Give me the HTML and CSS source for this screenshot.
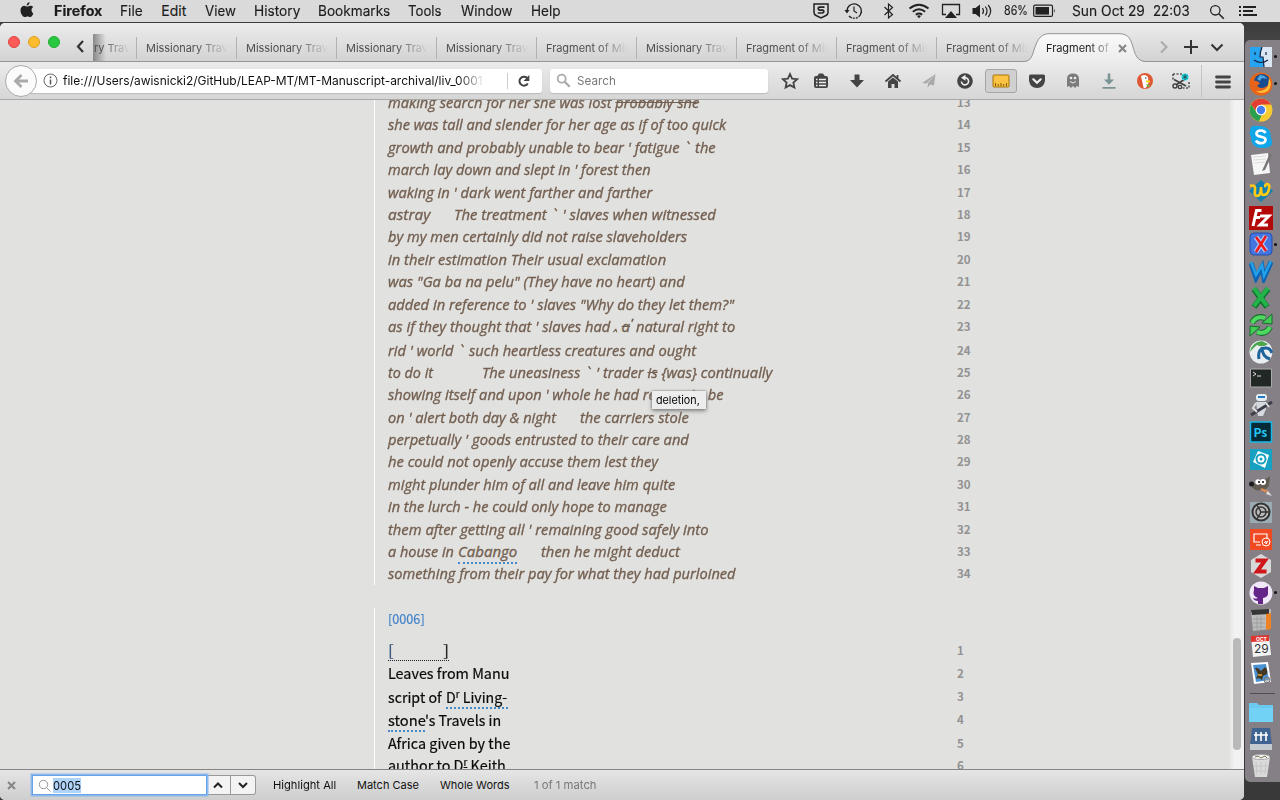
FILE: index.html
```html
<!DOCTYPE html>
<html lang="en">
<head>
<meta charset="utf-8">
<title>Fragment of Missionary Travels</title>
<link rel="stylesheet" href="styles.css">
</head>
<body>
<div class="screen">
<header class="menubar">
  <svg class="apple" width="16" height="18" viewBox="0 0 16 18"><path fill="#222" d="M10.6 1c.1 1.700-1.300 3.500-2.900 3.500C7.500 2.900 9 1.200 10.600 1zM14.300 12.400c-.8 2-2 3.700-3.200 3.700-1 0-1.400-.6-2.600-.6-1.200 0-1.600.6-2.600.6C4 16.100 1.500 12.700 1.500 9.400c0-3 1.900-4.600 3.800-4.600 1.200 0 2.200.8 2.900.8.7 0 1.900-.9 3.300-.9 1 0 2 .5 2.700 1.400-2.400 1.500-2 4.900.1 6.300z"/></svg>
  <nav class="menus"><b data-w="48">Firefox</b><span data-w="22.500">File</span><span data-w="25">Edit</span><span data-w="30.500">View</span><span data-w="46">History</span><span data-w="72">Bookmarks</span><span data-w="34">Tools</span><span data-w="52">Window</span><span data-w="30">Help</span></nav>
  <div class="status">
    <svg class="s-shield" width="18" height="18" viewBox="0 0 18 18"><path d="M2 2h14v8.500q0 2-2 3L9 16l-5-2.500q-2-1-2-3z" fill="none" stroke="#222" stroke-width="1.500"/><path d="M12.500 5.200H7.500Q6.200 5.200 6.200 6.500T7.500 8.200h3q1.300 0 1.300 1.300T10.500 11H5.800" fill="none" stroke="#222" stroke-width="1.700"/></svg>
    <svg class="s-clock" width="20" height="18" viewBox="0 0 20 18"><path d="M4 9a7.200 7.200 0 1 1 2 5" fill="none" stroke="#222" stroke-width="1.300" stroke-dasharray="29 1 2 1 2 1"/><path d="M1.500 8h5L4 11.500z" fill="#222"/><path d="M11 4.500V9l3 2" fill="none" stroke="#222" stroke-width="1.200"/></svg>
    <svg class="s-bt" width="12" height="18" viewBox="0 0 12 18"><path d="M1.500 5l8 7.500L5.500 16V2l4 3.500-8 7.500" fill="none" stroke="#222" stroke-width="1.200"/></svg>
    <svg class="s-wifi" width="22" height="18" viewBox="0 0 22 18"><g fill="none" stroke="#222" stroke-width="2"><path d="M1.500 6.500q9.500-7.500 19 0"/><path d="M4.800 9.700q6.200-4.800 12.400 0"/><path d="M7.800 12.700q3.200-2.400 6.400 0"/></g><path d="M9 14q2-1.500 4 0l-2 2.300z" fill="#222"/></svg>
    <svg class="s-air" width="20" height="18" viewBox="0 0 20 18"><path d="M5 12.500H1.500v-10h17v10H15" fill="none" stroke="#222" stroke-width="1.300"/><path d="M10 9l6 7H4z" fill="#222"/></svg>
    <svg class="s-vol" width="23" height="18" viewBox="0 0 23 18"><path d="M1.500 6h3L9 2.500v13L4.500 12h-3z" fill="#222"/><g fill="none" stroke="#222" stroke-width="1.200"><path d="M11.500 6q2 3 0 6"/><path d="M14.300 4.500q3.500 4.500 0 9"/><path d="M17.200 3q5 6 0 12"/></g></svg>
    <span class="pct" data-w="24">86%</span>
    <svg class="s-bat" width="23" height="14" viewBox="0 0 23 14"><rect x=".7" y="1.200" width="18.800" height="11.200" rx="1.500" fill="none" stroke="#222" stroke-width="1.200"/><path d="M2.500 3H16v7.600H2.500z" fill="#222"/><path d="M21 4.500q1.500 2.300 0 4.600z" fill="#222"/></svg>
    <span class="date" data-w="73">Sun Oct 29</span><span class="time" data-w="37">22:03</span>
    <svg class="s-mag" width="16" height="16" viewBox="0 0 16 16"><circle cx="6.300" cy="6.300" r="4.700" fill="none" stroke="#222" stroke-width="1.300"/><path d="M9.800 9.800l5 5" stroke="#222" stroke-width="1.600"/></svg>
    <svg class="s-list" width="18" height="12" viewBox="0 0 18 12"><path d="M0 2h2M0 6h2M0 10h2M4 2h13M4 6h10M4 10h14" stroke="#222" stroke-width="2"/></svg>
  </div>
</header>
<div class="desktop">
<main class="window">
  <div class="tabs">
    <div class="lights"><i class="red"></i><i class="amber"></i><i class="green"></i></div>
    <svg class="scroll-left" width="12" height="16" viewBox="0 0 12 16"><path d="M9 3L4 8.500 9 14" fill="none" stroke="#333" stroke-width="2.200"/></svg>
    <div class="tab first"><span>ry Trav</span></div>
    <div class="tab"><span>Missionary Trav</span></div><div class="tab"><span>Missionary Trav</span></div><div class="tab"><span>Missionary Trav</span></div><div class="tab"><span>Missionary Trav</span></div><div class="tab"><span>Fragment of Mis</span></div><div class="tab"><span>Missionary Trav</span></div><div class="tab"><span>Fragment of Mis</span></div><div class="tab"><span>Fragment of Mis</span></div><div class="tab"><span>Fragment of Mis</span></div>
    <div class="tab active">
      <svg class="tab-shape" width="124" height="30" viewBox="0 0 124 30"><defs><linearGradient id="tg" x2="0" y2="1"><stop stop-color="#fafafa"/><stop offset="1" stop-color="#ebebeb"/></linearGradient></defs><path d="M0 28.500C9 28.500 9 22 12 14S18 .7 26 .7H96C106 .7 108 7 110 14S114 28.500 123 28.500V30H0z" fill="url(#tg)"/><path d="M0 28.500C9 28.500 9 22 12 14S18 .7 26 .7H96C106 .7 108 7 110 14S114 28.500 123 28.500" fill="none" stroke="#939393"/></svg>
      <span>Fragment of</span>
      <svg class="tab-x" width="9" height="9" viewBox="0 0 9 9"><path d="M1 1l7 7M8 1L1 8" stroke="#888" stroke-width="2.200"/></svg>
    </div>
    <div class="tab-tools">
      <svg width="12" height="16" viewBox="0 0 12 16"><path d="M3 2.500L8.500 8 3 13.500" fill="none" stroke="#aaa" stroke-width="2"/></svg>
      <svg width="16" height="16" viewBox="0 0 16 16"><path d="M8 1v14M1 8h14" stroke="#333" stroke-width="2"/></svg>
      <svg width="14" height="16" viewBox="0 0 14 16"><path d="M1.500 5.500L7 11l5.500-5.500" fill="none" stroke="#333" stroke-width="2"/></svg>
    </div>
  </div>
  <div class="toolbar">
    <div class="back"><svg width="16" height="16" viewBox="0 0 16 16"><path d="M15 8H3M8.500 2L2.500 8l6 6" fill="none" stroke="#aaa" stroke-width="2.800"/></svg></div>
    <div class="url">
      <svg width="15" height="15" viewBox="0 0 15 15"><circle cx="7.500" cy="7.500" r="6.500" fill="none" stroke="#666"/><path d="M7.500 6.500v5M7.500 3.500v1.700" stroke="#555" stroke-width="1.500"/></svg>
      <div class="address"><span data-w="420">file:///Users/awisnicki2/GitHub/LEAP-MT/MT-Manuscript-archival/liv_0001</span></div>
      <div class="reload"><svg width="14" height="14" viewBox="0 0 14 14"><path d="M10.800 9.500A4.500 4.500 0 1 1 10 3.800" fill="none" stroke="#444" stroke-width="2"/><path d="M12.300 1v6H6.500z" fill="#444"/></svg></div>
    </div>
    <div class="search"><svg width="15" height="15" viewBox="0 0 15 15"><circle cx="5.700" cy="5.700" r="4" fill="none" stroke="#aaa" stroke-width="1.800"/><path d="M8.700 8.700l5 5" stroke="#aaa" stroke-width="2.300"/></svg><span data-w="39">Search</span></div>
    <svg class="star" width="18" height="18" viewBox="0 0 18 18"><path d="M9 2l2.100 4.600 5 .6-3.700 3.400 1 5L9 13.100l-4.400 2.500 1-5L1.900 7.200l5-.6z" fill="none" stroke="#444" stroke-width="1.800"/></svg>
    <div class="buttons">
      <i><svg width="18" height="18" viewBox="0 0 18 18"><rect x="2" y="4" width="14" height="12" rx="2" fill="#444"/><path d="M5 4.500L7 1.500h4l2 3z" fill="#444"/><path d="M4 7.500h1.500M4 10.500h1.500M4 13.500h1.500M7 7.500h7M7 10.500h7M7 13.500h7" stroke="#eee" stroke-width="1.300"/></svg></i>
      <i><svg width="18" height="18" viewBox="0 0 18 18"><path d="M6.500 2.500h5V8H16l-7 7.500L2 8h4.500z" fill="#444"/></svg></i>
      <i><svg width="18" height="18" viewBox="0 0 18 18"><path d="M1.500 9.500L9 3l7.500 6.500M13.500 3v4" fill="none" stroke="#444" stroke-width="1.800"/><path d="M4 9.500l5-4 5 4V16h-3.500v-4h-3v4H4z" fill="#444"/></svg></i>
      <i><svg width="18" height="18" viewBox="0 0 18 18"><path d="M15.500 2L2 11l4.500.5zM15.500 2L8 11l-.5 5 2.500-3.500 4 1z" fill="#aaa"/></svg></i>
      <i><svg width="18" height="18" viewBox="0 0 18 18"><circle cx="9" cy="9" r="7.800" fill="#444"/><path d="M7.500 6A3.600 3.600 0 1 1 5.400 9.500" fill="none" stroke="#eee" stroke-width="1.600"/><path d="M9.500 2.800v6L5 5.800z" fill="#eee"/></svg></i>
      <i class="pressed"><svg width="18" height="14" viewBox="0 0 18 14"><rect x="1" y="1" width="16" height="12" rx="1" fill="#fac344" stroke="#a77306"/><path d="M3.500 12V9M6.200 12v-2M9 12V9m2.700 3v-2m2.800 2V9" stroke="#805400"/></svg></i>
      <i><svg width="18" height="18" viewBox="0 0 18 18"><path d="M1 4q0-1.500 1.500-1.500h13Q17 2.500 17 4v4.500q-1 7.500-8 7.500T1 8.500z" fill="#444"/><path d="M5.300 7.300L9 10.800l3.700-3.500" fill="none" stroke="#eee" stroke-width="2.200" stroke-linecap="round"/></svg></i>
      <i><svg width="18" height="18" viewBox="0 0 18 18"><path d="M3 15V7q0-5.500 6-5.500T15 7v8l-2-1-2 2-2-2-2 2-2-2z" fill="#7c7c7c"/><circle cx="7" cy="6" r="1.300" fill="#eee"/><circle cx="11" cy="6" r="1.300" fill="#eee"/><path d="M6 9.500q3 3 6 0" fill="none" stroke="#eee"/></svg></i>
      <i><svg width="18" height="18" viewBox="0 0 18 18"><path d="M7.700 1.500h2.600v6h3.700L9 12.800 4 7.500h3.700zM2.500 15h13v1.700h-13z" fill="#7b9393"/></svg></i>
      <i><svg width="18" height="18" viewBox="0 0 18 18"><circle cx="9" cy="9" r="8" fill="#de5833"/><path d="M5 4q4-2.500 7 1l.5 6-3 5.500-2-1z" fill="#fff"/><path d="M10 8.500h4v1.700h-4z" fill="#fdd20a"/><path d="M10 12l4 1-2 2.500z" fill="#67bd47"/><circle cx="9.700" cy="6" r=".8" fill="#345"/></svg></i>
      <i><svg width="20" height="18" viewBox="0 0 20 18"><path d="M2 2h9M2 2v6M18 10v6h-8" fill="none" stroke="#555" stroke-dasharray="2 1.500" stroke-width="1.600"/><path d="M3 7.500l12 6.500M5 13l9-6" stroke="#444" stroke-width="1.800"/><circle cx="4" cy="14" r="2" fill="none" stroke="#444" stroke-width="1.500"/><circle cx="9" cy="15" r="1.700" fill="none" stroke="#444" stroke-width="1.300"/><circle cx="14" cy="5" r="3.500" fill="#19ddec"/><path d="M14 2v6M11.500 3.500l5 3M16.500 3.500l-5 3" stroke="#255"/></svg></i>
    </div>
    <div class="burger"><svg width="16" height="14" viewBox="0 0 16 14"><path d="M1.500 2h13M1.500 7h13M1.500 12h13" stroke="#444" stroke-width="2.800" stroke-linecap="round"/></svg></div>
  </div>
  <div class="content">
    <div class="pages">
      <section class="page deleted" id="page5"></section>
      <section class="page" id="page6"></section>
    </div>
    <div class="tooltip"><span data-w="44">deletion,</span></div>
    <div class="track"><div class="thumb"></div></div>
  </div>
  <div class="find">
    <svg width="9" height="9" viewBox="0 0 9 9"><path d="M1 1l7 7M8 1L1 8" stroke="#858585" stroke-width="2"/></svg>
    <div class="find-field"><svg width="13" height="13" viewBox="0 0 13 13"><circle cx="5.500" cy="5.500" r="4.200" fill="none" stroke="#999"/><path d="M8.500 8.500l4 4" stroke="#999"/></svg><mark data-w="28">0005</mark></div>
    <div class="arrows"><i><svg width="12" height="10" viewBox="0 0 12 10"><path d="M2 7.500l4-4 4 4" fill="none" stroke="#222" stroke-width="2"/></svg></i><i><svg width="12" height="10" viewBox="0 0 12 10"><path d="M2 3l4 4 4-4" fill="none" stroke="#222" stroke-width="2"/></svg></i></div>
    <span class="opt" data-w="63">Highlight All</span><span class="opt" data-w="62">Match Case</span><span class="opt" data-w="70">Whole Words</span><span class="count" data-w="62.500">1 of 1 match</span>
  </div>
</main>
<aside class="dock">
  <i class="run"><svg viewBox="0 0 24 24"><path d="M1 2h22v20H1z" fill="#dbe6f2"/><path d="M1 2h12q-2 5-2 10h3l1 10H1z" fill="#26a4f0"/><path d="M6 7v3m11-3v3M5 15q7 5 14 0M13 2q-2 5-2 10h3l1 10" fill="none" stroke="#124" stroke-width="1.200"/></svg></i>
  <i class="run"><svg viewBox="0 0 24 24"><circle cx="12" cy="12" r="11.500" fill="#e66515"/><circle cx="13" cy="10" r="8" fill="#174c91"/><path d="M11 3q5 0 7 4l-5-1-2 3-3-2z" fill="#4aa5db"/><path d="M2 5q1 4 6 4l3 2-3 3q4 4 10 0 3-3 3-8 4 9-1 14-8 6-15 0Q-1 14 2 5z" fill="#e8641a"/><path d="M20 6q4 7-1 13-7 4-12 0 9 1 12-5z" fill="#ffc038"/></svg></i>
  <i><svg viewBox="0 0 24 24"><circle cx="12" cy="12" r="11.500" fill="#f7ca31"/><path d="M2 6.500a11.500 11.500 0 0 1 20 0H12L8 14z" fill="#e23e31"/><path d="M2 6.500L8 15l5 1-3 7.300A11.500 11.500 0 0 1 2 6.500z" fill="#2c9f4f"/><circle cx="12" cy="12" r="5.300" fill="#fff"/><circle cx="12" cy="12" r="4.200" fill="#477ff0"/></svg></i>
  <i><svg viewBox="0 0 24 24"><path d="M1 6q0-6 7-5 14-1 14 12 4 9-6 10Q2 24 2 12 0 9 1 6z" fill="#10a6e9"/><path d="M16.500 8Q15 5.500 12 5.500c-3 0-4.500 1.300-4.500 3.200 0 4.300 9 1.800 9 6 0 2-1.800 3.500-4.500 3.500Q8.500 18.200 7 15.500" fill="none" stroke="#fff" stroke-width="2.700"/></svg></i>
  <i><svg viewBox="0 0 24 24"><path d="M2 3l17-2 2 20-16 2z" fill="#f6f6f6"/><path d="M4 5l13-1m-13 4l13-1m-12 4l13-1" stroke="#ddd"/><path d="M21 1l-8 18 3-1 7-15z" fill="#777"/></svg></i>
  <i><svg viewBox="0 0 24 24"><path d="M12 1l12 11-12 11L0 12z" fill="#1280af"/><path d="M1 7q6-2 5 4-1 6 2 6 4 0 4-9 0 8 2 8 5 0 6-6 1-5-2-5-3 1-1 3" fill="none" stroke="#ffc915" stroke-width="2.700"/></svg></i>
  <i><svg viewBox="0 0 24 24"><path d="M0 0h24v24H0z" fill="#b40909"/><path d="M12.500 4.500H7.500L4 20M5 11.500h6M11 10h9l-9 9h8" fill="none" stroke="#fff" stroke-width="3"/></svg></i>
  <i class="run"><svg viewBox="0 0 24 24"><rect x="1" y="1" width="22" height="22" rx="4" fill="#4275dd" stroke="#254db0"/><path d="M7 5l10 14M17 4L7 20" stroke="#b7c9f5" stroke-width="5"/><path d="M7 5l10 14M17 4L7 20" stroke="#ed1b1b" stroke-width="2.600"/></svg></i>
  <i><svg viewBox="0 0 24 24"><path d="M2 4l5 15 6-11 2 11 7-16" fill="none" stroke="#0d65b6" stroke-width="5"/><path d="M2 3l5 13 6-10 2 11 7-15" fill="none" stroke="#23a0e8" stroke-width="2.500"/></svg></i>
  <i><svg viewBox="0 0 24 24"><path d="M5 3l13 18M19 3L5 21" stroke="#0d762c" stroke-width="6"/><path d="M5 2l13 18M19 2L5 20" stroke="#23b34b" stroke-width="4"/></svg></i>
  <i><svg viewBox="0 0 24 24"><g fill="none" stroke="#176c2a" stroke-width="6"><path d="M3 10q4-8 13-5M21 14q-4 8-13 5"/></g><g fill="none" stroke="#4eda61" stroke-width="4"><path d="M3 10q4-8 13-5M21 14q-4 8-13 5"/></g><path d="M13 10l10 1V1zM11 14l-10-1v10z" fill="#43cb56" stroke="#176c2a"/></svg></i>
  <i><svg viewBox="0 0 24 24"><circle cx="12" cy="12" r="11.500" fill="#e8eef2"/><path d="M1 12Q3 2 13 1l6 3q-5 4-11 1-4 3-7 7z" fill="#4ca64b"/><path d="M10 19Q8 8 17 8q4 0 6 5M13 7q0 10 8 12" fill="none" stroke="#1e659b" stroke-width="3"/></svg></i>
  <i><svg viewBox="0 0 24 24"><path d="M1.500 3h21v18h-21z" fill="#222826" stroke="#aaa"/><path d="M4 6l3 2-3 2M8 10h4" fill="none" stroke="#ddd"/></svg></i>
  <i><svg viewBox="0 0 24 24"><rect x="7" y="1" width="11" height="7" rx="3" fill="#e5edf5"/><path d="M9 4h7" stroke="#267bc2" stroke-width="2"/><path d="M7 9h10v7l-3 7h-5z" fill="#d5dae1"/><path d="M2 22L23 9" stroke="#3d3d4a" stroke-width="3"/><path d="M7 10l-3 5 4 4M17 10l3 4" fill="none" stroke="#ddd" stroke-width="2"/></svg></i>
  <i><svg viewBox="0 0 24 24"><path d="M1.500 2h21v20h-21z" fill="#062a37" stroke="#17b9e9" stroke-width="1.500"/><text x="4.500" y="17" class="ps">Ps</text></svg></i>
  <i><svg viewBox="0 0 24 24"><path d="M1 2h22v21H1z" fill="#16a0c1"/><path d="M9 4l11 4-4 13-12-6z" fill="#fff"/><circle cx="12" cy="12" r="4.500" fill="none" stroke="#16a0c1" stroke-width="2"/><circle cx="12" cy="12" r="1.500" fill="#16a0c1"/></svg></i>
  <i><svg viewBox="0 0 24 24"><path d="M1 10q2-3 6 0l2-4 4 2 8-6-1 9q-2 6-9 5-6 2-10-6z" fill="#625b51"/><circle cx="9" cy="8" r="2.700" fill="#fff"/><circle cx="14" cy="8" r="3" fill="#fff"/><circle cx="10" cy="8" r="1"/><circle cx="14" cy="8" r="1"/><circle cx="2.500" cy="10" r="2.500" fill="#1d1d1d"/><path d="M12 15l7 3" stroke="#e28c50" stroke-width="2"/><path d="M19 17l4 5-6-2z" fill="#ddd"/></svg></i>
  <i><svg viewBox="0 0 24 24"><path d="M1 2h22v21H1z" fill="#9babb3"/><circle cx="12" cy="12" r="8.500" fill="#bbb" stroke="#333" stroke-width="2"/><circle cx="12" cy="12" r="5" fill="none" stroke="#333" stroke-width="1.500"/><path d="M12 12h8M12 12L8 5m4 7l-4 7" fill="none" stroke="#333" stroke-width="1.500"/></svg></i>
  <i><svg viewBox="0 0 24 24"><path d="M1 2h22v21H1z" fill="#f04a23"/><path d="M11 15H5V7h13v4M7 18h5" fill="none" stroke="#fff" stroke-width="1.200"/><circle cx="17" cy="15" r="4" fill="none" stroke="#fff"/><path d="M15 16l2-2v3l2-3" fill="none" stroke="#fff"/></svg></i>
  <i><svg viewBox="0 0 24 24"><path d="M12 0l10 6v12l-10 6-10-6V6z" fill="#d8d8d8"/><path d="M6.500 6.500H16L8 17.500h9.500" fill="none" stroke="#cf171b" stroke-width="4"/></svg></i>
  <i class="run"><svg viewBox="0 0 24 24"><circle cx="12" cy="12" r="11.500" fill="#f0e8f8"/><path d="M5 5l4 2h6l4-2v6q1 5-5 6v6H9v-3q-4 0-5-3 3 1 5 0-6-2-4-8z" fill="#642488"/></svg></i>
  <i><svg viewBox="0 0 24 24"><path d="M2 4l20-3v20L4 23z" fill="#bbb"/><path d="M2 2l18-1v5L3 7z" fill="#363636"/><path d="M17 6l5-1v16l-5 1z" fill="#ed8123"/><path d="M4 11h12M4 15h12M4 19h12M8 8v14m4-14v14" stroke="#999" stroke-width=".8"/></svg></i>
  <i><svg viewBox="0 0 24 24"><path d="M2 3l18-1 2 19-18 2z" fill="#f4f4f4"/><path d="M2 2l18-1v6L2 8z" fill="#e1342e"/><text x="7" y="7" class="oct">OCT</text><text x="5" y="19" class="day">29</text></svg></i>
  <i><svg viewBox="0 0 24 24"><path d="M2 2l17-1 3 20-17 2z" fill="#fff"/><path d="M4 4l13-1 3 16-13 2z" fill="#4a92d4"/><path d="M6 7q3-1 6 3l4-4q3 2 2 7l-4 2-1 4-3-2-3 1 2-5z" fill="#463820"/><path d="M9 14h4" stroke="#e0a830" stroke-width="1.500"/><circle cx="18" cy="19" r="3" fill="#9998" stroke="#777"/></svg></i>
  <hr>
  <i><svg viewBox="0 0 24 24"><path d="M0 3h8l2 2h14v17H0z" fill="#69c9ef"/><path d="M0 8h24v14H0z" fill="#72d2f5"/></svg></i>
  <i><svg viewBox="0 0 24 24"><path d="M3 1h18l2 18H1z" fill="#3f6491"/><path d="M1 17h22v6H1z" fill="#c3cbd0"/><path d="M7 5v9m5-9v9m5-9v9M5 8h14" stroke="#fff" stroke-width="1.600"/></svg></i>
  <i><svg viewBox="0 0 24 24"><path d="M3 3h18l-3 20H6z" fill="#d9dad9"/><ellipse cx="12" cy="3" rx="9" ry="2.500" fill="#f5f5f5" stroke="#aaa"/><path d="M6 3l3-1 3 2 4-2 2 2" stroke="#775" fill="none"/><path d="M7 8l1 12m4-12v12m5-12l-1 12M5 12h14M6 17h12" stroke="#c6c6c6" fill="none"/></svg></i>
</aside>
</div>
</div>
<script src="script.js"></script>
</body>
</html>
```
FILE: styles.css
```css
* { box-sizing: border-box; }
body { margin: 0; font-family: Inter, "Liberation Sans", sans-serif; }
i { font-style: normal; }
svg { display: block; flex: none; }
[data-w] { display: inline-block; white-space: pre; flex: none; }
.fit { display: inline-block; transform-origin: 0 50%; white-space: pre; }
.screen { width: 1280px; height: 800px; overflow: hidden; display: flex; flex-direction: column; }

.menubar { height: 22px; flex: none; display: flex; align-items: center; background: #dadada; color: #1d1d1d; font-size: 14px; line-height: 22px; -webkit-text-stroke: .15px #1d1d1d; }
.apple { margin: -2px 0 0 19px; }
.menus { display: flex; gap: 18.400px; margin-left: 19px; }
.status { display: flex; align-items: center; margin-left: 251px; }
.s-clock { margin-left: 13px; }
.s-bt { margin-left: 20px; }
.s-wifi { margin-left: 13px; }
.s-air { margin-left: 11px; }
.s-vol { margin-left: 10px; }
.pct { margin-left: 10px; font-size: 12.500px; }
.s-bat { margin-left: 5px; }
.date { margin-left: 16px; }
.time { margin-left: 8px; }
.s-mag { margin: 2px 0 0 19px; }
.s-list { margin-left: 14px; }

.desktop { flex: 1; min-height: 0; display: flex; background: linear-gradient(#3c3c3c, #444 20px, #393939); padding-top: 1px; }
.window { width: 1244px; display: flex; flex-direction: column; border-radius: 5px; overflow: hidden; background: #e1e1df; }
.tabs { height: 39px; flex: none; display: flex; align-items: flex-start; background: linear-gradient(#ececec, #d3d3d3); border-bottom: 1px solid #959595; }
.lights { display: flex; gap: 8px; padding: 13px 0 0 8px; }
.lights i { width: 12px; height: 12px; border-radius: 50%; }
.red { background: #fc5b57; border: 1px solid #df443f; }
.amber { background: #fdbc2e; border: 1px solid #dfa023; }
.green { background: #28c940; border: 1px solid #1dac2d; }
.scroll-left { margin: 15px 0 0 14px; }
.tab { width: 100px; height: 38px; flex: none; padding: 14px 8px 0 10px; color: #505050; font-size: 11px; line-height: 22px; background: linear-gradient(#b2b2b2, #b2b2b2) 0 14px / 1px 22px no-repeat; }
.tab > span { display: block; white-space: nowrap; width: 82px; letter-spacing: -.04px; -webkit-mask-image: linear-gradient(90deg, #000 50px, transparent 82px); mask-image: linear-gradient(90deg, #000 50px, transparent 82px); }
.tab.first { width: 43px; margin-left: 7px; padding-left: 1px; background: linear-gradient(90deg, #888, #d3d3d300 13px) 0 11px / 14px 28px no-repeat; }
.tab.first > span { width: 34px; -webkit-mask-image: linear-gradient(90deg, #000 8px, transparent 36px); mask-image: linear-gradient(90deg, #000 8px, transparent 36px); }
.tab.active { position: relative; background: none; color: #222; }
.tab.active > span { position: relative; width: 66px; -webkit-mask-image: linear-gradient(90deg, #000 44px, transparent 68px); mask-image: linear-gradient(90deg, #000 44px, transparent 68px); }
.tab-shape { position: absolute; left: -13px; top: 10px; }
.tab-x { position: absolute; left: 82px; top: 21px; }
.tab-tools { display: flex; align-items: center; padding: 16px 0 0 22px; gap: 13px; }
.tab-tools svg:last-child { margin-left: -2px; }

.toolbar { height: 38px; flex: none; display: flex; align-items: center; background: linear-gradient(#ebebeb, #d6d6d6); border-bottom: 1px solid #aaa; font-size: 12px; }
.back { position: relative; width: 32px; height: 32px; margin-left: 5px; border: 1px solid #aaa; border-radius: 50%; background: #fbfbfb; display: flex; align-items: center; justify-content: center; }
.url { height: 24px; width: 512px; margin-left: -7px; padding-left: 13px; background: #fff; border-radius: 0 3px 3px 0; display: flex; align-items: center; box-shadow: 0 1px 1px #bbb; }
.address { width: 428px; margin-left: 5px; overflow: hidden; line-height: 24px; color: #111; -webkit-mask-image: linear-gradient(90deg, #000 395px, transparent 422px); mask-image: linear-gradient(90deg, #000 395px, transparent 422px); }
.reload { border-left: 1px solid #ccc; margin-left: 16px; padding: 1px 0 1px 9px; }
.search { height: 24px; width: 218px; margin-left: 8px; padding-left: 6px; background: #fff; border-radius: 3px; display: flex; align-items: center; gap: 6px; color: #777; box-shadow: 0 1px 1px #bbb; }
.star { margin-left: 13px; }
.buttons { display: flex; margin-left: 4px; }
.buttons i { width: 36px; height: 24px; display: flex; align-items: center; justify-content: center; }
.buttons .pressed { width: 32px; margin: 0 2px; background: #d0d0d0; border: 1px solid #a5a5a5; border-radius: 3px; }
.burger { margin-left: 2px; height: 32px; padding: 10px 0 0 13px; border-left: 1px solid #c4c4c4; }

.content { position: relative; height: 669px; flex: none; overflow: hidden; display: flex; background: #e1e1df; font-family: "Noto Sans CJK SC", "Noto Sans", sans-serif; font-size: 14.500px; }
.pages { width: 1230px; flex: none; padding-left: 374px; }
.page { width: 597px; border-left: 1.500px solid #fff; padding: 0 0 0 12.500px; color: #0a0a0a; margin-bottom: 23px; }
.page .copy { -webkit-text-stroke: .2px currentColor; }
.deleted { margin-top: -9px; color: #735f50; }
.deleted .copy { font-family: "Open Sans", "Noto Sans", sans-serif; font-style: italic; font-size: 15px; -webkit-text-stroke: .35px #735f50; }
.row { display: flex; height: 22.400px; line-height: 22.400px; }
.row.tall { height: 23.600px; line-height: 23.600px; }
.copy { flex: 1; display: flex; white-space: pre; }
.num { width: 14px; color: #929292; font-size: 11.500px; font-weight: 700; }
.page-id { color: #4484ca; font-size: 13px; line-height: 22px; margin: 0 0 9px; -webkit-text-stroke: .2px #4484ca; }
#page6 { height: 180px; }
sup { font-size: 10px; line-height: 0; vertical-align: 5px; }
.caret { font-size: 9px; }
.of { padding: 0 2px; }
.place { border-bottom: 2px dotted #438acb; height: 24px; }
.gap-note { border-bottom: 1px dotted #222; height: 23px; margin-top: -1px; color: #222; }
.note-open { color: #37587c; }
.tooltip { position: absolute; left: 652px; top: 291px; width: 54px; height: 18px; padding-left: 3.500px; background: #ededed; box-shadow: 0 0 2px #777, 0 2px 4px #888; font: 11px/18px Inter, sans-serif; color: #000; }
.track { width: 14px; background: linear-gradient(90deg, #e7e7e7, #f3f3f3 5px, #f0f0f0); padding: 538px 3px 0; }
.thumb { height: 112px; border-radius: 4px; background: #b9b9b9; }

.find { height: 31px; flex: none; display: flex; align-items: center; border-top: 1px solid #858585; background: linear-gradient(#e5e5e5, #cecece); font-size: 11px; color: #111; padding-left: 7px; }
.find-field { position: relative; width: 175px; height: 20px; margin-left: 16px; background: #fff; border: 1px solid #68a4e5; box-shadow: 0 0 0 1.500px #8dbaee; display: flex; align-items: center; gap: 2px; padding-left: 5px; }
.find-field mark { background: #b0d3fa; color: #111; line-height: 15px; font-size: 12px; }
.arrows { display: flex; height: 20px; margin-left: -2px; border: 1px solid #999; border-left: 0; border-radius: 0 3px 3px 0; background: #f3f3f3; }
.arrows i { width: 25px; display: flex; align-items: center; justify-content: center; }
.arrows i + i { border-left: 1px solid #999; }
.opt { margin-left: 21px; }
.find .opt:first-of-type { margin-left: 17px; }
.count { margin-left: 24px; color: #777; }

.dock { width: 35px; height: 742px; margin: 17px 0 0 1px; border-radius: 5px 0 0 5px; background: #858085; padding: 3.500px 0 0; }
.dock i { display: flex; height: 26.800px; align-items: center; padding-left: 4px; }
.dock svg { width: 24px; height: 24px; }
.dock .run::after { content: ""; width: 3px; height: 3px; margin-left: 1px; border-radius: 50%; background: #111; }
.dock hr { height: 1px; margin: 6px 5px 5px; border: 0; background: #514d51; }
.ps { fill: #22c6f4; font: bold 12px "Noto Sans CJK SC", sans-serif; }
.oct { fill: #fff; font: bold 5px Inter, sans-serif; }
.day { fill: #333; font: 12px Inter, sans-serif; }
```
FILE: script.js
```js
// Each segment is [markup, width, gap before, extra class].
const deleted = [
  [[["making search for her she was lost <s>probably she</s>", 311]]],
  [[["she was tall and slender for her age as if of too quick", 338.5]]],
  [[["growth and probably unable to bear ' fatigue ` the", 328]]],
  [[["march lay down and slept in ' forest then", 262.5]]],
  [[["waking in ' dark went farther and farther", 264.5]]],
  [[["astray", 42], ["The treatment ` ' slaves when witnessed", 262, 24]]],
  [[["by my men certainly did not raise slaveholders", 299.5]]],
  [[["in their estimation Their usual exclamation", 278]]],
  [[["was \"Ga ba na pelu\" (They have no heart) and", 297]]],
  [[["added in reference to ' slaves \"Why do they let them?\"", 346]]],
  [[["as if they thought that ' slaves had", 222], ["‸", 5, 4, "caret"], ["<s>a</s>", 8, 3], ["<sup>'</sup>", 3, 0], ["natural right to", 99, 3.5]], "tall"],
  [[["rid ' world ` such heartless creatures and ought", 308]]],
  [[["to do it", 45], ["The uneasiness ` ' trader <s>is</s> {was} continually", 290, 49.5]]],
  [[["showing itself and upon ' whole he had reason to be", 335.5]]],
  [[["on ' alert both day &amp; night", 168], ["the carriers stole", 109, 24.5]]],
  [[["perpetually ' goods entrusted to their care and", 301]]],
  [[["he could not openly accuse them lest they", 270]]],
  [[["might plunder him of all and leave him quite", 287.5]]],
  [[["in the lurch - he could only hope to manage", 279]]],
  [[["them after getting all ' remaining good safely into", 320.5]]],
  [[["a house in", 65.5], ["Cabango", 59, 5, "place"], ["then he might deduct", 139, 24]]],
  [[["something from their pay for what they had purloined", 347.5]]]
];
const leaves = [
  [[["<span class='note-open'>[</span>             ]", 61, 0, "gap-note"]], "tall"],
  [[["Leaves from Manu", 121]]],
  [[["script of", 54], ["D<sup>r</sup> Living-", 61.5, 4.5, "place"]], "tall"],
  [[["stone", 37.5, 0, "place"], ["'s Travels in", 76.5]], "tall"],
  [[["Africa given by the", 122]]],
  [[["author to D<sup><u>r</u></sup> Keith", 118]]]
];
const render = (lines, first) => lines.map(([parts, cls], n) =>
  `<div class="row ${cls || ""}"><div class="copy">${parts.map(([text, w, gap, c]) =>
    `<span class="${c || ""}" data-w="${w}" style="margin-left:${gap || 0}px">${text.replace("`", "<span class='of'>`</span>")}</span>`).join("")}</div><span class="num">${first + n}</span></div>`).join("");
document.getElementById("page5").innerHTML = render(deleted, 13);
document.getElementById("page6").innerHTML = `<div class="page-id"><span data-w="37">[0006]</span></div>` + render(leaves, 1);

// Set every label to its designated width.
document.querySelectorAll("[data-w]").forEach(el => {
  const inner = document.createElement("span");
  inner.className = "fit";
  inner.append(...el.childNodes);
  el.append(inner);
  const width = Number(el.dataset.w);
  const scale = width / inner.offsetWidth;
  el.style.width = width + "px";
  inner.style.transform = `scaleX(${scale})`;
});
```
